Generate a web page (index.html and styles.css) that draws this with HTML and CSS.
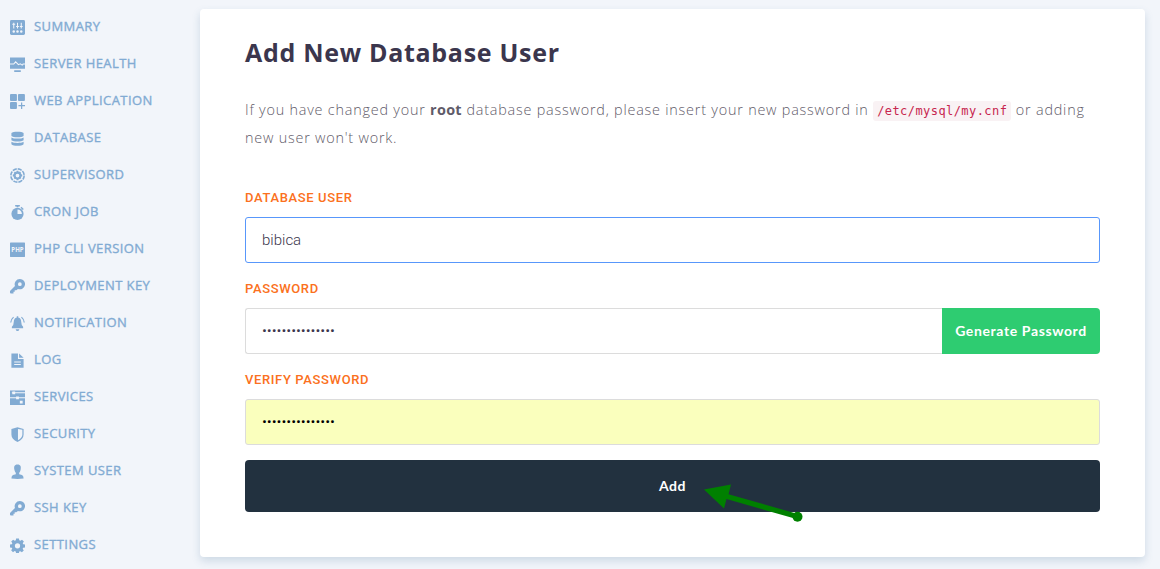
FILE: index.html
```
<!DOCTYPE html>
<html lang="en">
<head>
<meta charset="utf-8">
<title>Add New Database User</title>
<link rel="stylesheet" href="styles.css">
</head>
<body>
<div class="layout">
<nav class="sidebar">
<a class="item"><svg class="icon" viewBox="0 0 16 16"><rect width="16" height="16" rx="1.5"/><g class="cut"><path d="M4 3v6M8 3v6M12 3v6M2.5 4.5h3M6.5 7h3M10.5 7h3"/></g><g class="hole"><circle cx="4" cy="12.2" r="1.3"/><circle cx="8" cy="12.2" r="1.3"/><circle cx="12" cy="12.2" r="1.3"/></g></svg><span>SUMMARY</span></a>
<a class="item"><svg class="icon" viewBox="0 0 16 16"><path d="M0 .5h16v12H0zM4.5 14h7v2h-7z"/><path class="cut" d="M0 7.500h4l2-2.300 3 3 2-1 2 1.400 1-1.100h2"/></svg><span>SERVER HEALTH</span></a>
<a class="item"><svg class="icon" viewBox="0 0 16 16"><rect width="7.4" height="7.4" rx="1"/><rect x="8.5" width="7.4" height="7.4" rx="1"/><rect y="8.5" width="7.4" height="7.4" rx="1"/><path class="line" d="M12.4 9v7M9 12.5h7"/></svg><span>WEB APPLICATION</span></a>
<a class="item"><svg class="icon" viewBox="0 0 16 16"><path d="M1.500 2.200C3 .2 13 .2 14.500 2.200v3C13 7.200 3 7.200 1.500 5.200zM1.500 6.800c2.500 1.700 10.500 1.700 13 0v3c-2 2-11 2-13 0zM1.500 11.400c2.500 1.700 10.500 1.700 13 0v2.800c-2 2.200-11 2.200-13 0z"/></svg><span>DATABASE</span></a>
<a class="item"><svg class="icon" viewBox="0 0 16 16"><circle class="ring" cx="8" cy="8" r="7.100"/><path fill-rule="evenodd" d="M7 3h2l.3 1.300 1.300-.6 1.400 1.500-.6 1.200L13 7v2l-1.500.4.6 1.300-1.500 1.400-1.200-.6L9 13H7l-.4-1.500-1.300.6L3.900 10.700l.6-1.300L3 9V7l1.500-.5-.6-1.200 1.400-1.500 1.300.6zM8 6a2 2 0 1 0 0 4 2 2 0 0 0 0-4z"/></svg><span>SUPERVISORD</span></a>
<a class="item"><svg class="icon" viewBox="0 0 16 16"><path d="M5.500 0h5v1.500H9v1H7v-1H5.500zM12.200 1.800l2.500 2.400-1 1-2.500-2.200z"/><circle cx="8" cy="9.500" r="6.500"/><path class="hole" d="M8 4.800a4.700 4.700 0 0 1 4.700 4.700H8z"/></svg><span>CRON JOB</span></a>
<a class="item"><svg class="icon" viewBox="0 0 16 16"><rect y=".5" width="16" height="15.500" rx=".5"/><text class="php" x="8" y="10.700">PHP</text></svg><span>PHP CLI VERSION</span></a>
<a class="item"><svg class="icon" viewBox="0 0 16 16"><path fill-rule="evenodd" d="M10.500 0a5.500 5.500 0 1 1-2 10.600L6.700 12H5v1.600H3.700V15.500H1Q0 15.500 0 14.500V12.700L5.300 7.400A5.500 5.500 0 0 1 10.500 0zM10.500 3.500a2 2 0 1 0 0 4 2 2 0 0 0 0-4z"/></svg><span>DEPLOYMENT KEY</span></a>
<a class="item"><svg class="icon" viewBox="0 0 16 16"><path d="M7.200.2h1.600v1.300Q12 2.300 12 6.500q0 3.500 2 5V13H2v-1.500q2-1.500 2-5 0-4.200 3.200-5zM6 14h4q-.5 2-2 2t-2-2z"/><path class="line" d="M3.800 1.200Q1 3.500.8 7M12.200 1.200Q15 3.500 15.200 7"/></svg><span>NOTIFICATION</span></a>
<a class="item"><svg class="icon" viewBox="0 0 16 16"><path d="M1.500.5h7v5.800H14.500V15.800H1.500zM9.700.5l4.800 4.500H9.700z"/><path class="cut" d="M4.500 9.500h7M4.500 12.300h7"/></svg><span>LOG</span></a>
<a class="item"><svg class="icon" viewBox="0 0 16 16"><path d="M0 .5h16V16H0z"/><path class="cut" d="M2 3h14M0 8.300h16"/><path class="hole" d="M2.500 1.500h3v3h-3zM6.500 6.800h3v3h-3zM10.500 11.500h3v3h-3z"/></svg><span>SERVICES</span></a>
<a class="item"><svg class="icon" viewBox="0 0 16 16"><path fill-rule="evenodd" d="M8 .3 14.500 2v6q0 5-6.500 8-6.500-3-6.500-8V2zM8.500 2v12q4.700-2.500 4.700-6V3z"/></svg><span>SECURITY</span></a>
<a class="item"><svg class="icon" viewBox="0 0 16 16"><path d="M8 .5c3.500 0 4 2.500 3.300 5.700-.3 1.800-1 2.500-1.500 3.300v1.300l3 1q1.700.8 1.700 3.700Q11 16 8 16t-6.500-.5q0-2.900 1.700-3.700l3-1V9.500c-.5-.8-1.200-1.500-1.500-3.300C4 3 4.500.5 8 .5z"/></svg><span>SYSTEM USER</span></a>
<a class="item"><svg class="icon" viewBox="0 0 16 16"><path fill-rule="evenodd" d="M10.500 0a5.500 5.500 0 1 1-2 10.600L6.700 12H5v1.600H3.700V15.500H1Q0 15.500 0 14.500V12.700L5.300 7.400A5.500 5.500 0 0 1 10.500 0zM10.500 3.500a2 2 0 1 0 0 4 2 2 0 0 0 0-4z"/></svg><span>SSH KEY</span></a>
<a class="item"><svg class="icon" viewBox="0 0 16 16"><path fill-rule="evenodd" d="M6.500.5h3l.4 2 1.200.5 1.700-1.200 2 2L13.600 5.500l.5 1.200 1.900.3v3l-2 .4-.5 1.100 1.200 1.700-2 2-1.700-1.200-1.200.5-.3 1.700h-3l-.4-1.800-1.200-.5-1.700 1.200-2-2 1.200-1.600-.5-1.100L0 10V7l2-.3.500-1.200-1.200-1.700 2-2L5 3l1.200-.5zM8 5.500a2.800 2.800 0 1 0 0 5.600 2.800 2.800 0 0 0 0-5.600z"/></svg><span>SETTINGS</span></a>
</nav>
<main class="card">
<h1 class="title">Add New Database User</h1>
<p class="intro">If you have changed your <b>root</b> database password, please insert your new password in <code>/etc/mysql/my.cnf</code> or adding new user won't work.</p>
<form class="form">
<label class="label" for="user">DATABASE USER</label>
<input class="field field-active" id="user" type="text" value="bibica">
<label class="label" for="pass">PASSWORD</label>
<div class="group"><input class="field" id="pass" type="password" value="aaaaaaaaaaaaaaa"><button class="generate" type="button">Generate Password</button></div>
<label class="label" for="verify">VERIFY PASSWORD</label>
<input class="field field-filled" id="verify" type="password" value="aaaaaaaaaaaaaaa">
<button class="add" type="button">Add</button>
</form>
</main>
</div>
<svg class="arrow" viewBox="0 0 110 44"><path d="M4 9.500 31 4.500 28.500 14.300 98 34 96.500 39 26.500 19 24 28.500z"/><circle cx="97.500" cy="36.700" r="5"/></svg>
</body>
</html>
```
FILE: styles.css
```
* { box-sizing: border-box; }
body { margin: 0; width: 1160px; height: 569px; overflow: hidden; background: #f2f5fa; }
.layout { display: flex; height: 569px; }
.sidebar { width: 200px; flex: none; padding: 8px 0 0 10px; }
.item { display: flex; align-items: center; gap: 9px; height: 37px; color: #82abd3; font: 500 13px/18px "Open Sans", sans-serif; white-space: nowrap; }
.item span { margin-top: -2px; letter-spacing: .42px; -webkit-text-stroke: .35px #82abd3; }
.icon { width: 15px; height: 15px; margin-top: 2px; fill: #82abd3; flex: none; }
.cut { fill: none; stroke: #f2f5fa; stroke-width: 1.100; }
.hole { fill: #f2f5fa; }
.line { fill: none; stroke: #82abd3; stroke-width: 1.300; }
.ring { fill: none; stroke: #82abd3; stroke-width: 1.700; stroke-dasharray: 4.500 1.080; }
.php { fill: #f2f5fa; font: 700 6.500px "Open Sans", sans-serif; text-anchor: middle; }
.card { width: 945px; height: 548px; margin-top: 9px; padding: 26px 45px 0; background: #fff; border-radius: 4px; box-shadow: 0 4px 8px rgba(60, 110, 150, .2); }
.title { margin: 0; color: #3b364d; font: 700 25px/34px "Open Sans", sans-serif; letter-spacing: .7px; }
.intro { margin: 27px 0 0; color: #5f5b69; font: 300 14.400px/28px "Open Sans", sans-serif; letter-spacing: .79px; }
.intro b { font-weight: 700; letter-spacing: .3px; }
.intro code { padding: 3px 4px; border-radius: 3px; color: #c7254e; background: #f9f2f4; font: 12px "DejaVu Sans Mono", monospace; letter-spacing: .430px; }
.form { display: flex; flex-direction: column; padding-top: 36px; }
.label { height: 29px; color: #fb7020; font: 500 13px/20px Roboto, sans-serif; letter-spacing: .63px; }
.field { width: 100%; height: 46px; margin: 0 0 16px; padding: 0 16px; border: 1px solid #dcdcdc; border-radius: 3px; outline: 0; background: #fff; color: #3b364d; font: 300 15px Roboto, sans-serif; }
.field-active { border-color: #5897fb; }
.field-filled { margin-bottom: 15px; background: #faffbd; color: #000; }
.group { display: flex; height: 46px; margin-bottom: 16px; }
.group .field { flex: 1; min-width: 0; margin: 0; border-right: 0; border-radius: 3px 0 0 3px; }
.generate { width: 158px; padding: 0 0 2px; border: 0; border-radius: 0 4px 4px 0; background: #2ecc71; color: #fff; font: 700 14px Lato, sans-serif; letter-spacing: .62px; }
.add { height: 52px; padding: 0 0 2px; border: 0; border-radius: 4px; background: #22313f; color: #fff; font: 700 14px Lato, sans-serif; letter-spacing: .5px; }
.arrow { position: absolute; left: 700px; top: 480px; width: 110px; height: 44px; fill: #008000; }
```
